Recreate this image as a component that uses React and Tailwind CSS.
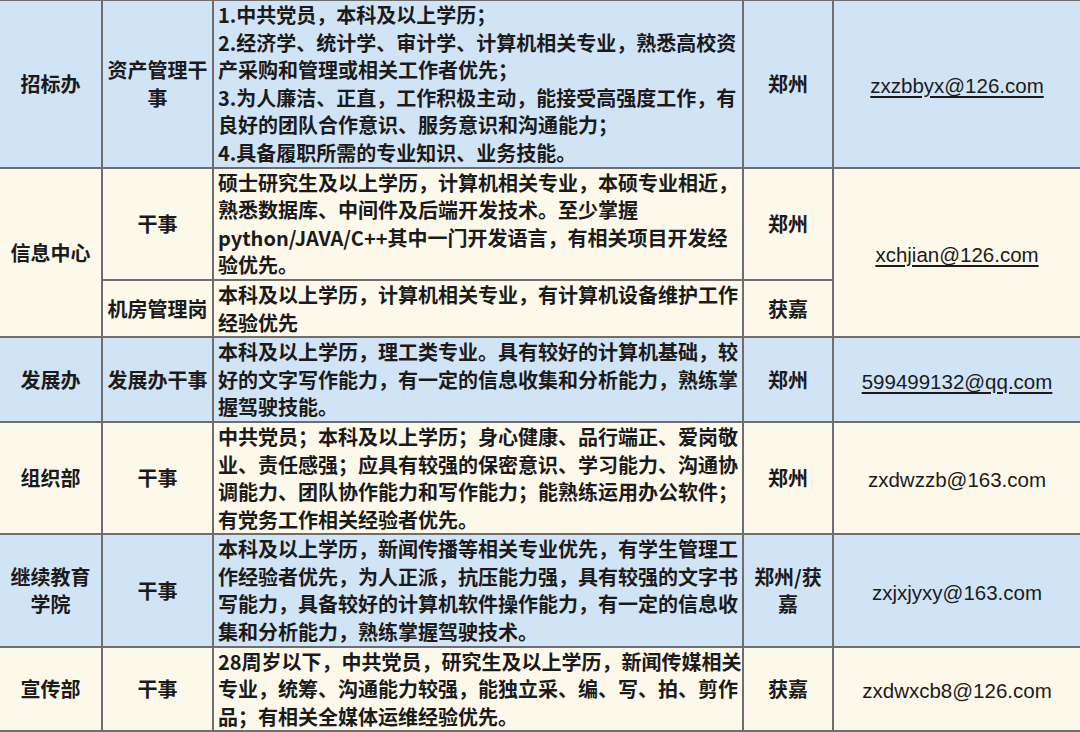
import React from "react";

const rows = [
  {
    dept: ["招标办"],
    bg: "bg-[#d1e4f6]",
    jobs: [
      {
        title: ["资产管理干", "事"],
        req: [
          "1.中共党员，本科及以上学历；",
          "2.经济学、统计学、审计学、计算机相关专业，熟悉高校资",
          "产采购和管理或相关工作者优先；",
          "3.为人廉洁、正直，工作积极主动，能接受高强度工作，有",
          "良好的团队合作意识、服务意识和沟通能力；",
          "4.具备履职所需的专业知识、业务技能。",
        ],
        place: ["郑州"],
      },
    ],
    email: "zxzbbyx@126.com",
    link: true,
  },
  {
    dept: ["信息中心"],
    bg: "bg-[#fdf9ea]",
    jobs: [
      {
        title: ["干事"],
        req: [
          "硕士研究生及以上学历，计算机相关专业，本硕专业相近，",
          "熟悉数据库、中间件及后端开发技术。至少掌握",
          "python/JAVA/C++其中一门开发语言，有相关项目开发经",
          "验优先。",
        ],
        place: ["郑州"],
      },
      {
        title: ["机房管理岗"],
        req: ["本科及以上学历，计算机相关专业，有计算机设备维护工作", "经验优先"],
        place: ["获嘉"],
      },
    ],
    email: "xchjian@126.com",
    link: true,
  },
  {
    dept: ["发展办"],
    bg: "bg-[#d1e4f6]",
    jobs: [
      {
        title: ["发展办干事"],
        req: [
          "本科及以上学历，理工类专业。具有较好的计算机基础，较",
          "好的文字写作能力，有一定的信息收集和分析能力，熟练掌",
          "握驾驶技能。",
        ],
        place: ["郑州"],
      },
    ],
    email: "599499132@qq.com",
    link: true,
  },
  {
    dept: ["组织部"],
    bg: "bg-[#fdf9ea]",
    jobs: [
      {
        title: ["干事"],
        req: [
          "中共党员；本科及以上学历；身心健康、品行端正、爱岗敬",
          "业、责任感强；应具有较强的保密意识、学习能力、沟通协",
          "调能力、团队协作能力和写作能力；能熟练运用办公软件；",
          "有党务工作相关经验者优先。",
        ],
        place: ["郑州"],
      },
    ],
    email: "zxdwzzb@163.com",
  },
  {
    dept: ["继续教育", "学院"],
    bg: "bg-[#d1e4f6]",
    jobs: [
      {
        title: ["干事"],
        req: [
          "本科及以上学历，新闻传播等相关专业优先，有学生管理工",
          "作经验者优先，为人正派，抗压能力强，具有较强的文字书",
          "写能力，具备较好的计算机软件操作能力，有一定的信息收",
          "集和分析能力，熟练掌握驾驶技术。",
        ],
        place: ["郑州/获", "嘉"],
      },
    ],
    email: "zxjxjyxy@163.com",
  },
  {
    dept: ["宣传部"],
    bg: "bg-[#fdf9ea]",
    jobs: [
      {
        title: ["干事"],
        req: [
          "28周岁以下，中共党员，研究生及以上学历，新闻传媒相关",
          "专业，统筹、沟通能力较强，能独立采、编、写、拍、剪作",
          "品；有相关全媒体运维经验优先。",
        ],
        place: ["获嘉"],
      },
    ],
    email: "zxdwxcb8@126.com",
  },
];

const cell = "border-2 border-[#6e6e6e] align-middle";

function Lines({ items }) {
  return items.map((t, i) => (
    <div key={i} className="whitespace-nowrap">
      {t}
    </div>
  ));
}

export default function App() {
  return (
    <div className="w-[1080px] h-[732px] overflow-hidden bg-[#fdf9ea]">
      <table
        className="-ml-[2px] -mt-[1px] border-collapse table-fixed w-[1090px] text-[20px] leading-[27.6px] text-[#1b1b1b] font-semibold"
        style={{ fontFamily: '"Noto Sans CJK SC", "Liberation Sans", sans-serif' }}
      >
        <colgroup>
          <col className="w-[103px]" />
          <col className="w-[111px]" />
          <col className="w-[530px]" />
          <col className="w-[90px]" />
          <col className="w-[256px]" />
        </colgroup>
        <tbody>
          {rows.map((r, ri) =>
            r.jobs.map((j, ji) => (
              <tr key={ri + "-" + ji} className={r.bg}>
                {ji === 0 && (
                  <td rowSpan={r.jobs.length} className={cell + " text-center"}>
                    <Lines items={r.dept} />
                  </td>
                )}
                <td className={cell + " text-center"}>
                  <Lines items={j.title} />
                </td>
                <td className={cell + " pl-[4px] py-0"}>
                  <Lines items={j.req} />
                </td>
                <td className={cell + " text-center"}>
                  <Lines items={j.place} />
                </td>
                {ji === 0 && (
                  <td
                    rowSpan={r.jobs.length}
                    className={cell + " text-center pr-[8px] pt-[4px] font-normal text-[20.5px]"}
                    style={{ fontFamily: '"Liberation Sans", sans-serif' }}
                  >
                    <span className={r.link ? "underline underline-offset-[3px] decoration-[1.5px]" : ""}>
                      {r.email}
                    </span>
                  </td>
                )}
              </tr>
            ))
          )}
        </tbody>
      </table>
    </div>
  );
}
